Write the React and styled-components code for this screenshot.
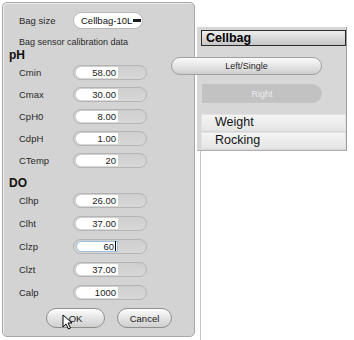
import React from "react";
import styled, { createGlobalStyle } from "styled-components";

const GlobalStyle = createGlobalStyle`
  html, body {
    margin: 0;
    padding: 0;
    background: #ffffff;
  }
  body {
    font-family: "Liberation Sans", Arial, sans-serif;
    width: 354px;
    height: 340px;
    overflow: hidden;
  }
`;

const Screen = styled.div`
  display: flex;
  align-items: flex-start;
  width: 354px;
  height: 340px;
`;

const Dialog = styled.div`
  position: relative;
  margin: 2px 0 0 2px;
  width: 193px;
  height: 335px;
  box-sizing: border-box;
  border: 1px solid #a8a8a8;
  border-radius: 5px;
  background: #d3d3d3;
  padding: 8px 0 0 16px;
  box-shadow: inset 1px 1px 0 #ececec;
`;

const TopRow = styled.div`
  display: flex;
  align-items: center;
  height: 18px;
`;

const Label = styled.div`
  width: 54px;
  font-size: 9.5px;
  color: #2a2a2a;
`;

const Dropdown = styled.div`
  display: flex;
  align-items: center;
  width: 70px;
  height: 17px;
  box-sizing: border-box;
  border: 1px solid #b8b8b8;
  border-radius: 9px;
  background: #ffffff;
  padding-left: 7px;
  font-size: 9.5px;
  white-space: nowrap;
  color: #111;
`;

const Minus = styled.span`
  display: inline-block;
  flex: none;
  width: 8px;
  height: 3px;
  margin-left: 1px;
  background: #1c1c1c;
`;

const Caption = styled.div`
  margin-top: 7px;
  font-size: 9px;
  line-height: 12px;
  color: #2a2a2a;
`;

const Section = styled.div`
  margin: ${(p) => p.$top}px 0 0 -10px;
  font-size: 12px;
  font-weight: bold;
  line-height: 12px;
  color: #111;
`;

const Row = styled.div`
  display: flex;
  align-items: center;
  height: ${(p) => p.$h}px;
`;

const FieldPill = styled.div`
  display: flex;
  align-items: center;
  width: 74px;
  height: 15px;
  box-sizing: border-box;
  border: 1px solid #b4b4b4;
  border-radius: 8px;
  background: linear-gradient(#cecece, #d8d8d8);
  padding-left: 2px;
`;

const Field = styled.div`
  width: 40px;
  height: 11px;
  border-radius: 6px 0 0 6px;
  background: #ffffff;
  box-shadow: ${(p) => (p.$focus ? "inset 0 0 0 1px #9cc0e0" : "none")};
  font-size: 9.5px;
  line-height: 11px;
  text-align: right;
  padding-right: 2px;
  color: #1a1a1a;
`;

const Caret = styled.span`
  display: inline-block;
  width: 1px;
  height: 10px;
  background: #000;
  vertical-align: top;
  margin-left: 1px;
`;

const Buttons = styled.div`
  display: flex;
  gap: 12px;
  margin: 4px 0 0 27px;
`;

const Button = styled.div`
  position: relative;
  display: flex;
  align-items: center;
  justify-content: center;
  width: ${(p) => p.$w}px;
  height: 20px;
  box-sizing: border-box;
  border: 1px solid #8e8e8e;
  border-radius: 10px;
  background: linear-gradient(#fdfdfd, #e2e2e2 55%, #cfcfcf);
  font-size: 9.5px;
  color: #1a1a1a;
`;

const Cursor = styled.svg`
  position: absolute;
  left: 15px;
  top: 5px;
`;

const Side = styled.div`
  position: relative;
  flex: 1;
  height: 340px;
  display: flex;
  flex-direction: column;
`;

const BackLine = styled.div`
  position: absolute;
  left: 5px;
  top: 150px;
  bottom: 0;
  width: 1px;
  background: #c4c4c4;
`;

const Panel = styled.div`
  position: relative;
  margin: 27px 0 0 2px;
  width: 150px;
  height: 124px;
  box-sizing: border-box;
  background: #d7d7d7;
  border-right: 1px solid #9a9a9a;
  border-bottom: 1px solid #b0b0b0;
  padding: 3px 0 0 4px;
  display: flex;
  flex-direction: column;
`;

const Header = styled.div`
  height: 16px;
  box-sizing: border-box;
  border: 1px solid #2a2a2a;
  background: linear-gradient(#ededed, #c6c6c6);
  font-size: 12.5px;
  font-weight: bold;
  line-height: 14px;
  padding-left: 4px;
  color: #000;
`;

const PillButton = styled.div`
  display: flex;
  align-items: center;
  justify-content: center;
  margin: ${(p) => p.$m};
  width: ${(p) => p.$w}px;
  height: ${(p) => p.$h}px;
  box-sizing: border-box;
  border: 1px solid ${(p) => (p.$disabled ? "#c4c4c4" : "#a0a0a0")};
  border-radius: ${(p) => (p.$disabled ? "0 10px 10px 0" : "9px")};
  background: ${(p) =>
    p.$disabled
      ? "#c2c2c2"
      : "linear-gradient(#fafafa, #e6e6e6 50%, #cdcdcd)"};
  font-size: 9px;
  color: ${(p) => (p.$disabled ? "#ececec" : "#2a2a2a")};
`;

const ListItem = styled.div`
  height: 17px;
  box-sizing: border-box;
  margin: ${(p) => p.$m};
  border: 1px solid #e2e2e2;
  background: linear-gradient(#f4f4f4, #e6e6e6);
  font-size: 12.5px;
  line-height: 15px;
  padding-left: 13px;
  color: #141414;
`;

const phRows = [
  ["Cmin", "58.00"],
  ["Cmax", "30.00"],
  ["CpH0", "8.00"],
  ["CdpH", "1.00"],
  ["CTemp", "20"],
];

const doRows = [
  ["Clhp", "26.00"],
  ["Clht", "37.00"],
  ["Clzp", "60", true],
  ["Clzt", "37.00"],
  ["Calp", "1000"],
];

const FieldRow = ({ label, value, focus, h }) => (
  <Row $h={h}>
    <Label>{label}</Label>
    <FieldPill>
      <Field $focus={focus}>
        {value}
        {focus && <Caret />}
      </Field>
    </FieldPill>
  </Row>
);

export default function App() {
  return (
    <Screen>
      <GlobalStyle />
      <Dialog>
        <TopRow>
          <Label>Bag size</Label>
          <Dropdown>
            Cellbag-10L
            <Minus />
          </Dropdown>
        </TopRow>
        <Caption>Bag sensor calibration data</Caption>
        <Section $top={1}>pH</Section>
        {phRows.map(([l, v]) => (
          <FieldRow key={l} label={l} value={v} h={22} />
        ))}
        <Section $top={6}>DO</Section>
        {doRows.map(([l, v, f]) => (
          <FieldRow key={l} label={l} value={v} focus={f} h={23} />
        ))}
        <Buttons>
          <Button $w={59}>
            OK
            <Cursor width="11" height="16" viewBox="0 0 11 16">
              <path
                d="M1 1 L1 13 L4 10 L6.5 15 L8.5 14 L6 9 L10 9 Z"
                fill="#ffffff"
                stroke="#000"
                strokeWidth="1"
              />
            </Cursor>
          </Button>
          <Button $w={55}>Cancel</Button>
        </Buttons>
      </Dialog>
      <Side>
        <BackLine />
        <Panel>
          <Header>Cellbag</Header>
          <PillButton $m="11px 0 0 -30px" $w={151} $h={18}>
            Left/Single
          </PillButton>
          <PillButton $disabled $m="9px 0 0 1px" $w={120} $h={19}>
            Right
          </PillButton>
          <ListItem $m="11px 0 0 0">Weight</ListItem>
          <ListItem $m="1px 0 0 0">Rocking</ListItem>
        </Panel>
      </Side>
    </Screen>
  );
}
